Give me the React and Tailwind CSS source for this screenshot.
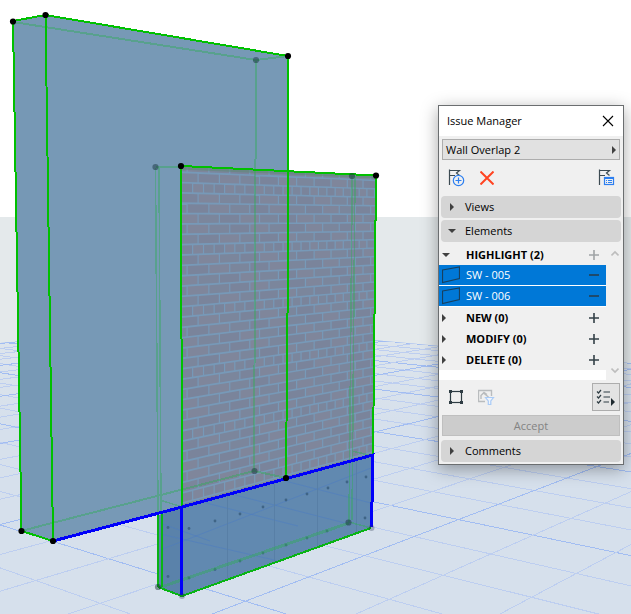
import { useState } from 'react'

const HORIZON = 217
const VP_LEFT = -990
const VP_RIGHT = 1248

// ground grid lines, evenly spaced in 1/y at the reference column x = 370
const gridLines = []
for (let k = -9; k <= 16; k++) {
  const slope = 1 / (0.00352 + 0.000289 * k) / (370 - VP_LEFT)
  gridLines.push({
    key: `a${k}`,
    major: k % 4 === 0,
    x1: -20,
    y1: HORIZON + slope * (-20 - VP_LEFT),
    x2: 650,
    y2: HORIZON + slope * (650 - VP_LEFT),
  })
}
for (let k = -6; k <= 20; k++) {
  const slope = 1 / (0.002972 + 0.000413 * k) / (VP_RIGHT - 370)
  gridLines.push({
    key: `b${k}`,
    major: k % 4 === 0,
    x1: -20,
    y1: HORIZON + slope * (VP_RIGHT + 20),
    x2: 650,
    y2: HORIZON + slope * (VP_RIGHT - 650),
  })
}

// brick courses run towards the right vanishing point
const JOINT = 1.972e-5
const depth = (x) => 1 / (VP_RIGHT - x)
const bricks = []
for (let row = 0; row < 34; row++) {
  const top = 162.8 + row * 10.35
  const bottom = top + 8.5
  const header = row % 6 === 2
  const step = header ? JOINT / 2 : JOINT
  const phase = header ? 0.25 : row % 2 === 0 ? 0.5 : 0
  const first = depth(198) - JOINT * (2 + phase)
  const count = header ? 30 : 15
  for (let i = 0; i < count; i++) {
    const x1 = VP_RIGHT - 1 / (first + i * step) + 0.7
    const x2 = VP_RIGHT - 1 / (first + (i + 1) * step) - 0.5
    if (x2 < 178 || x1 > 380) continue
    const at = (x, y) => HORIZON + ((y - HORIZON) * (VP_RIGHT - x)) / (VP_RIGHT - 181)
    bricks.push({
      key: `${row}-${i}`,
      shade: (row * 7 + i * 5) % 3,
      points: `${x1},${at(x1, top)} ${x2},${at(x2, top)} ${x2},${at(x2, bottom)} ${x1},${at(x1, bottom)}`,
    })
  }
}
const BRICK_SHADES = ['#7b869c', '#7f869b', '#7a849b']

const GHOST_DOTS = [[256, 60], [254.5, 471], [155.5, 167], [352, 176], [348.5, 522.5], [158, 587]]
const FAINT_DOTS = [[182, 596], [371.5, 528]]
const SOLID_DOTS = [[13, 21.5], [45.5, 15], [288, 56], [21.5, 531], [53, 541], [286, 478], [181, 166], [376, 175.5]]
const BOLTS = [
  [168, 527.5], [189, 528.5], [215, 521], [240, 514], [263, 507], [286, 500], [307, 494], [328, 488], [347, 482], [366, 477],
  [168, 576.5], [189, 578], [215, 569.5], [240, 561], [263, 553], [286, 545], [307, 538], [327, 531], [365, 518],
]

function Scene() {
  return (
    <svg viewBox="0 0 631 614" preserveAspectRatio="xMidYMid slice" className="absolute inset-0 h-full w-full" aria-hidden="true">
      <defs>
        <linearGradient id="ground" x1="0" y1="323" x2="0" y2="420" gradientUnits="userSpaceOnUse">
          <stop offset="0" stopColor="#dfe6ec" />
          <stop offset="1" stopColor="#d6e0ec" />
        </linearGradient>
        <clipPath id="plane">
          <polygon points="0,343 191,323.7 631,363 631,614 0,614" />
        </clipPath>
        <clipPath id="brickFace">
          <polygon points="181,166 376,175.5 373,455 182,507" />
        </clipPath>
        <clipPath id="face">
          <polygon points="160,514 182,507 373,455 371,528 182,596 160,587" />
        </clipPath>
      </defs>
      <rect width="631" height="614" fill="#ffffff" />
      <rect y="217" width="631" height="397" fill="#e4e9eb" />
      <g clipPath="url(#plane)">
        <rect y="320" width="631" height="294" fill="url(#ground)" />
        {gridLines.map(({ key, major, ...line }) => (
          <line key={key} {...line} stroke={major ? '#a2bdf2' : '#bdcef0'} strokeWidth="1" shapeRendering="crispEdges" />
        ))}
      </g>

      <polygon points="13,21 45,15 288,56 285,478 53,541 21,531" fill="#7799b6" />
      <polygon points="13,21 45,15 53,541 21,531" fill="#7698b5" />

      <polygon points="159,515 182,507 373,455 371,528 182,596 159,587" fill="#6189b0" />
      <polygon points="159,515 182,507 182,596 159,587" fill="#5a82aa" />
      <path d="M160 534L371 582M235 495L345 523M190 499L298 526M160 523L210 541M285 481L371 503M160 550L371 468" clipPath="url(#face)" stroke="#4c7cc4" strokeWidth="1" opacity="0.5" fill="none" />
      <path d="M227.500 495V579M274.500 482V562M317.500 471V547M356.500 461V533" stroke="#587fa6" strokeWidth="1" />
      {BOLTS.map(([x, y]) => (
        <circle key={`${x}-${y}`} cx={x} cy={y} r="1.4" fill="#3f6486" />
      ))}

      <g clipPath="url(#brickFace)">
        <rect x="178" y="160" width="202" height="350" fill="#7799b8" />
        {bricks.map((b) => (
          <polygon key={b.key} points={b.points} fill={BRICK_SHADES[b.shade]} />
        ))}
        <path d="M181 168L376 177" stroke="#5a8a70" strokeWidth="3" opacity="0.5" />
      </g>

      <g stroke="#2fae55" fill="none" opacity="0.42" strokeWidth="2" shapeRendering="crispEdges">
        <path d="M13 22L256 60L288 56M256 60L254 471M21 531L254 471L286 478" />
        <path d="M155.500 167L181 167M155.500 168L158 514M159 168L161 514" strokeWidth="1.500" />
        <path d="M352 176V200L349 522M355 177L352 520M352 451L373 456M160 500L182 507M349 522L371 528" strokeWidth="1.500" />
        <path d="M161 587L349 523" strokeWidth="3" />
      </g>

      <g strokeWidth="2" fill="none" shapeRendering="crispEdges">
        <path d="M158 514V587M161.500 513V587M158 587L182 596L371 528" stroke="#08b414" />
        <path d="M21.500 531L13 21L45.500 15L288 56L288 260L286 478M45.500 15L53 541L21.500 531" stroke="#00c000" />
        <path d="M182 507L181 166L376 175.500L373 455" stroke="#00c000" />
        <path d="M53 541L182 507L373 455L371.500 527M181.500 507V595" stroke="#0000fa" strokeWidth="3" />
      </g>

      {GHOST_DOTS.map(([x, y]) => (
        <circle key={`${x}-${y}`} cx={x} cy={y} r="3.1" fill="#0d2a30" opacity="0.45" />
      ))}
      {FAINT_DOTS.map(([x, y]) => (
        <circle key={`${x}-${y}`} cx={x} cy={y} r="3" fill="#20304a" opacity="0.3" />
      ))}
      {SOLID_DOTS.map(([x, y]) => (
        <circle key={`${x}-${y}`} cx={x} cy={y} r="3.1" fill="#000000" />
      ))}
    </svg>
  )
}

function Triangle({ open }) {
  return (
    <svg width="8" height="8" viewBox="0 0 8 8" className="shrink-0" aria-hidden="true">
      <path d={open ? 'M0 2H8L4 6Z' : 'M2 0V8L6 4Z'} fill="#404040" />
    </svg>
  )
}

function Flag() {
  return <path d="M1.500 16V0.500M1.500 1.500H11.500L8.500 4L11.500 6.500M1.500 6.500H7" fill="none" stroke="#3c4a52" strokeWidth="1.200" />
}

function Section({ title, open, onToggle }) {
  return (
    <button type="button" aria-expanded={open} onClick={onToggle} className="mx-0.5 flex h-[22px] items-center gap-[9px] rounded bg-[#d5d5d5] pl-[7px] text-left">
      <Triangle open={open} />
      {title}
    </button>
  )
}

function Group({ label, open, muted }) {
  return (
    <div className="flex h-[21px] items-center bg-[#f0f0f0] pr-1.5">
      <button
        type="button"
        aria-expanded={!!open}
        className={`flex flex-1 items-center text-left font-bold ${open ? 'gap-4 pl-[3px]' : 'gap-[18px] pl-px'}`}
      >
        <Triangle open={open} />
        {label}
      </button>
      <button type="button" aria-label={`Add to ${label}`}>
        <svg width="12" height="12" viewBox="0 0 12 12">
          <path d="M6 1V11M1 6H11" stroke={muted ? '#a0a4a6' : '#334047'} strokeWidth="1.600" />
        </svg>
      </button>
    </div>
  )
}

function WallItem({ name }) {
  return (
    <div className="flex h-[21px] items-center border-b border-white bg-[#0078d7] pr-1.5 pl-[3px] text-white">
      <svg width="18" height="18" viewBox="0 0 18 18" className="mr-1.5 shrink-0" aria-hidden="true">
        <path d="M0.500 4L17.500 1V12.500L0.500 16.500Z" fill="none" stroke="#17405f" strokeWidth="1.200" />
      </svg>
      <span className="flex-1">{name}</span>
      <button type="button" aria-label={`Remove ${name}`}>
        <svg width="12" height="12" viewBox="0 0 12 12">
          <path d="M1 6H11" stroke="#263f52" strokeWidth="1.600" />
        </svg>
      </button>
    </div>
  )
}

export default function App() {
  const [open, setOpen] = useState({ views: false, elements: true, comments: false })
  const toggle = (key) => setOpen((prev) => ({ ...prev, [key]: !prev[key] }))

  return (
    <main className="relative flex min-h-screen items-start justify-end overflow-hidden pt-[105px] pr-[7px] font-['Open_Sans','Noto_Sans',sans-serif] text-[11px] leading-4 text-black">
      <Scene />
      <section className="relative flex w-[186px] flex-col border border-[#6b6e70] bg-[#f0f0f0] pb-0.5 shadow-[0_4px_16px_rgba(0,0,0,0.35)]">
        <header className="flex h-[30px] items-center justify-between bg-white pr-[9px] pl-2">
          <h1>Issue Manager</h1>
          <button type="button" aria-label="Close">
            <svg width="12" height="12" viewBox="0 0 12 12">
              <path d="M1 1L11 11M11 1L1 11" stroke="#000000" strokeWidth="1.100" />
            </svg>
          </button>
        </header>

        <button type="button" className="mx-[3px] mt-[3px] flex h-[21px] items-center justify-between border border-[#adadad] bg-[#e1e1e1] pr-px pl-[3px]">
          Wall Overlap 2
          <Triangle />
        </button>

        <div className="flex h-9 items-center gap-[15px] pr-2 pl-[9px]">
          <button type="button" aria-label="New issue">
            <svg width="17" height="18" viewBox="0 0 17 18">
              <Flag />
              <circle cx="10.500" cy="11.500" r="5.200" fill="#f0f0f0" stroke="#2d7ff0" strokeWidth="1.200" />
              <path d="M10.500 8.500V14.500M7.500 11.500H13.500" stroke="#2d7ff0" strokeWidth="1.200" />
            </svg>
          </button>
          <button type="button" aria-label="Delete issue">
            <svg width="14" height="14" viewBox="0 0 14 14">
              <path d="M0.500 0.500L13.500 13.500M13.500 0.500L0.500 13.500" stroke="#ff4422" strokeWidth="2" />
            </svg>
          </button>
          <button type="button" aria-label="Issue details" className="ml-auto">
            <svg width="17" height="18" viewBox="0 0 17 18">
              <Flag />
              <rect x="6.500" y="8.500" width="9" height="7" fill="#f0f0f0" stroke="#2d7ff0" strokeWidth="1.200" />
              <path d="M6 9H16" stroke="#2d7ff0" strokeWidth="2" />
              <path d="M8 11.500H9M10 11.500H14M8 13.500H9M10 13.500H14" stroke="#2d7ff0" strokeWidth="1" />
            </svg>
          </button>
        </div>

        <div className="flex flex-col gap-0.5">
          <Section title="Views" open={open.views} onToggle={() => toggle('views')} />
          <Section title="Elements" open={open.elements} onToggle={() => toggle('elements')} />
        </div>

        <div className="mt-0.5 flex h-[136px]">
          <div className="flex flex-1 flex-col bg-white">
            <Group label="HIGHLIGHT (2)" open muted />
            <WallItem name="SW - 005" />
            <WallItem name="SW - 006" />
            <Group label="NEW (0)" />
            <Group label="MODIFY (0)" />
            <Group label="DELETE (0)" />
          </div>
          <div className="flex w-[17px] flex-col items-center justify-between py-1.5">
            <svg width="8" height="7" viewBox="0 0 8 7" aria-hidden="true">
              <path d="M0.500 5.500L4 2L7.500 5.500" fill="none" stroke="#bdbdbd" strokeWidth="1.600" />
            </svg>
            <svg width="8" height="7" viewBox="0 0 8 7" aria-hidden="true">
              <path d="M0.500 1.500L4 5L7.500 1.500" fill="none" stroke="#bdbdbd" strokeWidth="1.600" />
            </svg>
          </div>
        </div>

        <div className="mt-[3px] flex h-7 items-center gap-3.5 pr-[3px] pl-[9px]">
          <button type="button" aria-label="Select elements">
            <svg width="16" height="16" viewBox="0 0 16 16">
              <rect x="2.500" y="2.500" width="11" height="11" fill="none" stroke="#2f3d44" strokeWidth="1.200" />
              <path d="M1 1H4V4H1ZM12 1H15V4H12ZM1 12H4V15H1ZM12 12H15V15H12Z" fill="#2f3d44" />
            </svg>
          </button>
          <button type="button" aria-label="Filter view" disabled>
            <svg width="17" height="17" viewBox="0 0 17 17">
              <path d="M7 12.500H0.500V1.500H13.500V7" fill="none" stroke="#b9bcbe" strokeWidth="1.400" />
              <path d="M3 10V6.500L6 3.500L9 5.500M5.500 4L10.500 8" fill="none" stroke="#b9bcbe" strokeWidth="1.400" />
              <path d="M7.500 8.500H15.500L12.800 12V15.500H10.300V12Z" fill="#eef4fc" stroke="#a9cbf7" strokeWidth="1.200" />
            </svg>
          </button>
          <button type="button" aria-label="Actions" className="ml-auto flex size-7 items-center justify-center border border-[#adadad] bg-[#e3e3e3]">
            <svg width="20" height="18" viewBox="0 0 20 18">
              <path d="M1 3.500L2.500 5L5 2M1 8.500L2.500 10L5 7M1 13.500L2.500 15L5 12M7.500 4H14M7.500 9H14M7.500 14H13" fill="none" stroke="#2f3d44" strokeWidth="1.200" />
              <path d="M15 10V18L19 14Z" fill="#1f2a30" />
            </svg>
          </button>
        </div>

        <button type="button" disabled className="mx-[3px] my-1 h-[21px] border border-[#bfbfbf] bg-[#cccccc] text-[#838383]">
          Accept
        </button>
        <Section title="Comments" open={open.comments} onToggle={() => toggle('comments')} />
      </section>
    </main>
  )
}
